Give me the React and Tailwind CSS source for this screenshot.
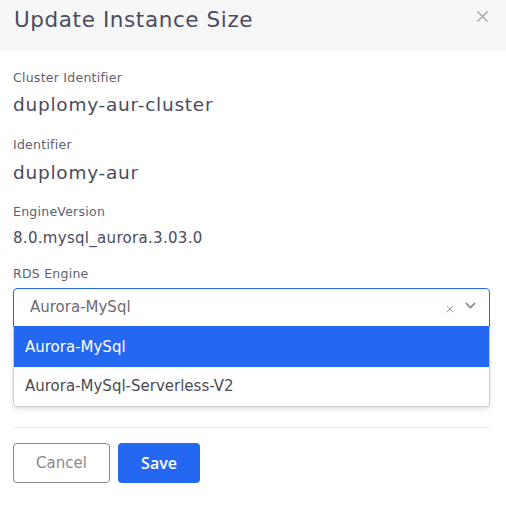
import { ChevronDown, X } from 'lucide-react';

const font = { fontFamily: '"DejaVu Sans", "Open Sans", sans-serif' };

const Field = ({ label, value, valueClass, labelMt, valueMt }) => (
  <>
    <div className={`text-[12.5px] leading-[18px] tracking-[0.25px] text-[#5f5f6d] ${labelMt}`}>{label}</div>
    <div className={`leading-[24px] text-[#4b4b5c] ${valueClass} ${valueMt}`}>{value}</div>
  </>
);

export default function App() {
  return (
    <div className="w-[506px] h-[532px] bg-white overflow-hidden" style={font}>
      <div className="h-[51px] bg-[#f7f7f7] flex justify-between items-start pl-[14px] pr-[14px]">
        <h2 className="text-[21.5px] leading-[30px] pt-[5px] tracking-[0.6px] text-[#4b4b61]">Update Instance Size</h2>
        <X size={19} strokeWidth={1.4} className="text-[#9d9da8] mt-[7px]" />
      </div>

      <div className="pl-[13px] pr-[16px] pt-[18px] flex flex-col">
        <Field label="Cluster Identifier" value="duplomy-aur-cluster" valueClass="text-[18.5px] tracking-[0.75px]" labelMt="" valueMt="mt-[6px]" />
        <Field label="Identifier" value="duplomy-aur" valueClass="text-[18.5px] tracking-[0.75px]" labelMt="mt-[19px]" valueMt="mt-[7px]" />
        <Field label="EngineVersion" value="8.0.mysql_aurora.3.03.0" valueClass="text-[15px] tracking-[0.3px]" labelMt="mt-[18px]" valueMt="mt-[5px]" />
        <div className="text-[12.5px] leading-[18px] tracking-[0.25px] text-[#5f5f6d] mt-[15px]">RDS Engine</div>

        <div className="relative mt-[5px]">
          <div className="h-[39px] border border-[#2468f2] rounded-t-[4px] flex items-center pl-[16px] pr-[10px]">
            <span className="flex-1 text-[15px] text-[#6b6b75]">Aurora-MySql</span>
            <X size={12} strokeWidth={1.9} className="text-[#9a9a9a] mt-[3px]" />
            <ChevronDown size={17} strokeWidth={2.2} className="text-[#8a8a8a] ml-[6px] -mt-[4px]" />
          </div>
          <div className="absolute left-0 right-0 top-[39px] bg-white border-x border-b border-[#cfcfcf] rounded-b-[4px] shadow-[0_2px_4px_rgba(0,0,0,0.12)] overflow-hidden">
            <div className="h-[40px] bg-[#2468f2] text-white text-[15px] flex items-center pl-[11px]">Aurora-MySql</div>
            <div className="h-[39px] text-[#4b4b55] text-[15px] flex items-center pl-[11px]">Aurora-MySql-Serverless-V2</div>
          </div>
        </div>

        <div className="mt-[100px] border-t border-[#ededed]" />

        <div className="flex gap-[8px] mt-[15px]">
          <button className="w-[97px] h-[40px] border border-[#8a8a8a] rounded-[4px] text-[15px] text-[#8a8a8a] bg-white">Cancel</button>
          <button className="w-[82px] h-[40px] rounded-[4px] text-[16px] font-semibold text-white bg-[#2468f2]" style={{ fontFamily: '"Open Sans", sans-serif' }}>Save</button>
        </div>
      </div>
    </div>
  );
}
